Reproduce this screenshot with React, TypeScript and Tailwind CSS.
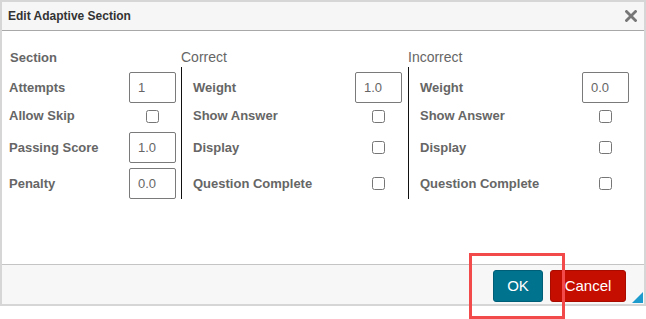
const font = { fontFamily: '"Liberation Sans", Arial, sans-serif' };

type Row =
  | { label: string; kind: "input"; value: string }
  | { label: string; kind: "check" };

const sectionRows: Row[] = [
  { label: "Attempts", kind: "input", value: "1" },
  { label: "Allow Skip", kind: "check" },
  { label: "Passing Score", kind: "input", value: "1.0" },
  { label: "Penalty", kind: "input", value: "0.0" },
];

const correctRows: Row[] = [
  { label: "Weight", kind: "input", value: "1.0" },
  { label: "Show Answer", kind: "check" },
  { label: "Display", kind: "check" },
  { label: "Question Complete", kind: "check" },
];

const incorrectRows: Row[] = [
  { label: "Weight", kind: "input", value: "0.0" },
  { label: "Show Answer", kind: "check" },
  { label: "Display", kind: "check" },
  { label: "Question Complete", kind: "check" },
];

// row heights follow the original form spacing
const rowClass = [
  "h-[31px]",
  "h-[26px]",
  "h-[31px] mt-[3px]",
  "h-[31px] mt-[5px]",
];

function Field({ row }: { row: Row }) {
  return (
    <div className="w-[47px] flex justify-center">
      {row.kind === "input" ? (
        <input
          readOnly
          value={row.value}
          className="w-[47px] h-[31px] border border-[#7a7a7a] rounded-[2px] pl-[8px] text-[13px] text-[#666] bg-white outline-none"
          style={font}
        />
      ) : (
        <input type="checkbox" className="m-0 w-[13px] h-[13px]" />
      )}
    </div>
  );
}

function Rows({ rows }: { rows: Row[] }) {
  return (
    <>
      {rows.map((row, i) => (
        <div key={row.label} className={`flex items-center justify-between ${rowClass[i]}`}>
          <span className="text-[13px] font-bold text-[#666]">{row.label}</span>
          <Field row={row} />
        </div>
      ))}
    </>
  );
}

export default function App() {
  return (
    <div className="w-[646px] h-[319px] bg-white relative overflow-hidden" style={font}>
      <div className="w-[646px] h-[306px] border-2 border-[#d6d6d6] flex flex-col bg-white">
        <div className="h-[29px] bg-[#f6f6f6] border-b border-[#a8a8a8] flex items-center justify-between pl-[6px] pr-[5px]">
          <span className="text-[12px] font-bold text-[#333]">Edit Adaptive Section</span>
          <svg width="12" height="12" viewBox="0 0 12 12" className="mr-[2px]">
            <path d="M1.5 1.5 L10.5 10.5 M10.5 1.5 L1.5 10.5" stroke="#777" strokeWidth="2.8" strokeLinecap="square" />
          </svg>
        </div>

        <div className="flex-1 flex pt-[17px]">
          <div className="w-[179px] flex flex-col">
            <div className="h-[19px] leading-[19px] pl-[8px] text-[13px] font-bold text-[#666]">Section</div>
            <div className="pt-[5px] pl-[7px] pr-[5px]">
              <Rows rows={sectionRows} />
            </div>
          </div>

          <div className="w-[227px] flex flex-col">
            <div className="h-[19px] leading-[19px] text-[14px] text-[#666]">Correct</div>
            <div className="border-l border-[#111] pt-[5px] pl-[11px] pr-[6px]">
              <Rows rows={correctRows} />
            </div>
          </div>

          <div className="flex-1 flex flex-col">
            <div className="h-[19px] leading-[19px] text-[14px] text-[#666]">Incorrect</div>
            <div className="border-l border-[#111] pt-[5px] pl-[11px] pr-[15px]">
              <Rows rows={incorrectRows} />
            </div>
          </div>
        </div>

        <div className="h-[40px] border-t border-[#c4c4c4] bg-[#f7f7f7] flex justify-end items-start pt-[5px] pr-[18px] gap-[7px] relative">
          <button className="w-[50px] h-[32px] bg-[#00738f] border border-[#005f77] rounded-[3px] text-white text-[15px]">
            OK
          </button>
          <button className="w-[76px] h-[32px] bg-[#c50d00] border border-[#a80b00] rounded-[3px] text-white text-[15px]">
            Cancel
          </button>
          <svg width="11" height="11" viewBox="0 0 11 11" className="absolute right-[1px] bottom-[1px]">
            <path d="M11 0 L11 11 L0 11 Z" fill="#1e9bcd" />
          </svg>
        </div>
      </div>

      <div className="absolute left-[469px] top-[253px] w-[96px] h-[66px] border-[3px] border-[#f24a4a]" />
    </div>
  );
}
